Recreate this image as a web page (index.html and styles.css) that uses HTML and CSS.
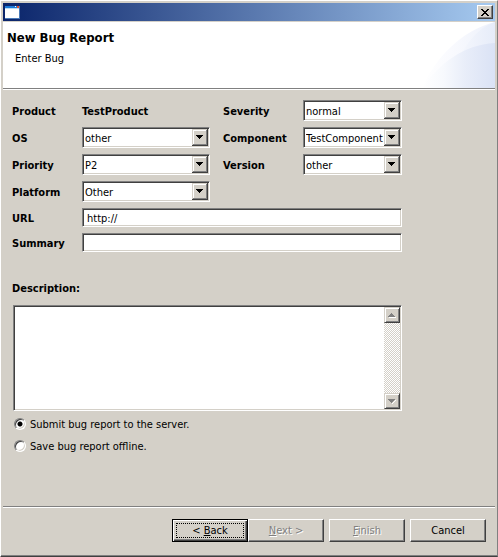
FILE: index.html
```html
<!DOCTYPE html>
<html lang="en">
<head>
<meta charset="utf-8">
<title>New Bug Report</title>
<link rel="stylesheet" href="styles.css">
</head>
<body>
<div class="window">
  <div class="titlebar">
    <svg class="app-icon" width="15" height="13" viewBox="0 0 15 13" shape-rendering="crispEdges" aria-hidden="true">
      <rect width="15" height="13" fill="#4a7ab8"/>
      <rect width="14" height="12" fill="#fff"/>
      <rect width="14" height="2" fill="#1c7ad8"/>
      <rect y="2" width="14" height="1" fill="#b8dcf4"/>
      <rect x="10" width="1" height="1" fill="#fff"/>
      <rect x="12" width="2" height="2" fill="#e05030"/>
    </svg>
    <button class="close" type="button" aria-label="Close">
      <svg width="8" height="7" viewBox="0 0 8 7" shape-rendering="crispEdges" aria-hidden="true">
        <path d="M0 0h2v1h1v1h2V1h1V0h2v1H7v1H6v1H5v1h1v1h1v1h1v1H6V6H5V5H3v1H2v1H0V6h1V5h1V4h1V3H2V2H1V1H0z"/>
      </svg>
    </button>
  </div>

  <header class="banner">
    <div>
      <h1>New Bug Report</h1>
      <p>Enter Bug</p>
    </div>
    <svg class="swoosh" width="75" height="66" viewBox="0 0 75 66" aria-hidden="true">
      <defs>
        <linearGradient id="g1" x1="0" x2="1"><stop offset="0" stop-color="#fff"/><stop offset=".4" stop-color="#f9fafe"/><stop offset="1" stop-color="#edf1fb"/></linearGradient>
        <linearGradient id="g2" x1="0" x2="1"><stop offset="0" stop-color="#f9fafe"/><stop offset="1" stop-color="#e6ecf9"/></linearGradient>
        <linearGradient id="g3" x1="0" x2="1"><stop offset="0" stop-color="#fff"/><stop offset=".3" stop-color="#f7f9fd"/><stop offset=".6" stop-color="#e8edf9"/><stop offset="1" stop-color="#dae2f5"/></linearGradient>
      </defs>
      <path d="M2 66C15 36 42 8 75 0V66z" fill="url(#g1)"/>
      <path d="M30 66C36 36 51 8 75 0V66z" fill="url(#g2)"/>
      <path d="M2 66C20 41 43 23 75 21V66z" fill="url(#g3)"/>
    </svg>
  </header>

  <form class="content" id="bug">
    <div class="fields">
      <span class="label">Product</span>
      <span class="label">TestProduct</span>
      <label class="label second" for="severity">Severity</label>
      <span class="combo"><select id="severity"><option>normal</option></select><svg class="arrow" width="16" height="17" viewBox="0 0 16 17" shape-rendering="crispEdges" aria-hidden="true"><use href="#combo-button"/></svg></span>

      <label class="label" for="os">OS</label>
      <span class="combo"><select id="os"><option>other</option></select><svg class="arrow" width="16" height="17" viewBox="0 0 16 17" shape-rendering="crispEdges" aria-hidden="true"><use href="#combo-button"/></svg></span>
      <label class="label second" for="component">Component</label>
      <span class="combo"><select id="component"><option>TestComponent</option></select><svg class="arrow" width="16" height="17" viewBox="0 0 16 17" shape-rendering="crispEdges" aria-hidden="true"><use href="#combo-button"/></svg></span>

      <label class="label" for="priority">Priority</label>
      <span class="combo"><select id="priority"><option>P2</option></select><svg class="arrow" width="16" height="17" viewBox="0 0 16 17" shape-rendering="crispEdges" aria-hidden="true"><use href="#combo-button"/></svg></span>
      <label class="label second" for="version">Version</label>
      <span class="combo"><select id="version"><option>other</option></select><svg class="arrow" width="16" height="17" viewBox="0 0 16 17" shape-rendering="crispEdges" aria-hidden="true"><use href="#combo-button"/></svg></span>

      <label class="label" for="platform">Platform</label>
      <span class="combo"><select id="platform"><option>Other</option></select><svg class="arrow" width="16" height="17" viewBox="0 0 16 17" shape-rendering="crispEdges" aria-hidden="true"><use href="#combo-button"/></svg></span>

      <label class="label start" for="url">URL</label>
      <input class="text wide" id="url" type="text" value="http://">

      <label class="label start" for="summary">Summary</label>
      <input class="text wide" id="summary" type="text">
    </div>

    <div class="description">
      <label class="label" for="description">Description:</label>
      <div class="memo">
        <textarea id="description"></textarea>
        <div class="scrollbar" aria-hidden="true">
          <span class="scroll-button"><svg width="8" height="5" viewBox="0 0 8 5" shape-rendering="crispEdges"><path d="M1 4h7v1H1z" fill="#fff"/><path d="M3 0h1v1h1v1h1v1h1v1H0V3h1V2h1V1h1z" fill="#808080"/></svg></span>
          <span class="scroll-button"><svg width="8" height="5" viewBox="0 0 8 5" shape-rendering="crispEdges"><path d="M7 1h1v1H7v1H6v1H5v1H4V4h1V3h1V2h1z" fill="#fff"/><path d="M0 0h7v1H6v1H5v1H4v1H3V3H2V2H1V1H0z" fill="#808080"/></svg></span>
        </div>
      </div>
    </div>

    <div class="choices">
      <label><input type="radio" name="target" checked>Submit bug report to the server.</label>
      <label><input type="radio" name="target">Save bug report offline.</label>
    </div>
  </form>

  <footer class="actions">
    <div class="pair">
      <button class="button default" type="button"><span class="focus">&lt; <u>B</u>ack</span></button>
      <button class="button" type="button" disabled><u>N</u>ext &gt;</button>
    </div>
    <button class="button" type="submit" form="bug" disabled><u>F</u>inish</button>
    <button class="button" type="button">Cancel</button>
  </footer>
</div>

<svg class="symbols" width="0" height="0" aria-hidden="true">
  <symbol id="combo-button" viewBox="0 0 16 17">
    <path d="M0 0h16v17H0z" fill="#404040"/>
    <path d="M0 0h15v16H0z" fill="#d4d0c8"/>
    <path d="M1 1h14v15H1z" fill="#808080"/>
    <path d="M1 1h13v14H1z" fill="#fff"/>
    <path d="M2 2h12v13H2z" fill="#d4d0c8"/>
    <path d="M4 6h7v1h-1v1H9v1H8v1H7V9H6V8H5V7H4z" fill="#000"/>
  </symbol>
</svg>
</body>
</html>
```

FILE: styles.css
```css
* {
  box-sizing: border-box;
}

body {
  margin: 0;
  background: #d4d0c8;
  color: #000;
  font: 11px/13px "DejaVu Sans Condensed", Tahoma, "DejaVu Sans", sans-serif;
}

button,
input,
select,
textarea {
  margin: 0;
  font: inherit;
  color: inherit;
}

.symbols {
  position: absolute;
}

.window {
  display: flex;
  flex-direction: column;
  min-height: 100vh;
  padding: 2px 2px 1px;
  border: 1px solid;
  border-color: #fff #808080 #404040 #fff;
  box-shadow: inset 0 -1px #808080;
}

.titlebar {
  display: flex;
  align-items: center;
  justify-content: space-between;
  height: 18px;
  padding: 0 2px;
  background: linear-gradient(to right, #0a246a, #a6caf0);
}

.close {
  display: flex;
  align-items: center;
  justify-content: center;
  width: 16px;
  height: 14px;
  padding: 0;
  border: 1px solid;
  border-color: #fff #404040 #404040 #fff;
  background: #d4d0c8;
  box-shadow: inset -1px -1px #808080;
}

.banner {
  display: flex;
  justify-content: space-between;
  height: 69px;
  border-top: 1px solid #d4d0c8;
  border-bottom: 1px solid #fff;
  background: #fff;
  box-shadow: inset 0 -1px #808080;
}

.banner h1 {
  margin: 8px 0 0 4px;
  font-size: 13px;
  line-height: 16px;
}

.banner p {
  margin: 6px 0 0 12px;
}

.swoosh {
  display: block;
}

.content {
  flex: 1;
  padding: 10px 9px;
}

.fields {
  display: grid;
  grid-template-columns: 70px 128px 93px 99px;
  row-gap: 6px;
  align-items: center;
}

.label {
  padding-top: 2px;
  font-weight: bold;
}

.second {
  padding-left: 13px;
}

.start {
  grid-column: 1;
}

.wide {
  grid-column: 2 / -1;
}

.combo,
.text,
.memo {
  border: 1px solid;
  border-color: #808080 #fff #fff #808080;
  background: #fff;
  box-shadow: inset 1px 1px #404040, inset -1px -1px #d4d0c8;
}

.combo {
  position: relative;
  height: 21px;
}

.combo select {
  display: block;
  width: 100%;
  height: 19px;
  padding: 2px 17px 0 2px;
  border: 0;
  background: transparent;
  appearance: none;
  outline: 0;
}

.arrow {
  position: absolute;
  top: 1px;
  right: 1px;
  pointer-events: none;
}

.text {
  width: 100%;
  height: 19px;
  padding: 2px 4px 0;
  outline: 0;
}

.description {
  display: grid;
  gap: 10px;
  width: 390px;
  margin-top: 28px;
}

.memo {
  display: flex;
  margin-left: 1px;
  padding: 1px;
}

.memo textarea {
  flex: 1;
  height: 102px;
  padding: 2px 4px;
  border: 0;
  background: transparent;
  resize: none;
  outline: 0;
}

.scrollbar {
  display: flex;
  flex-direction: column;
  justify-content: space-between;
  background: repeating-conic-gradient(#fff 0 25%, #d4d0c8 0 50%) 0 0 / 2px 2px;
}

.scroll-button {
  display: flex;
  align-items: center;
  justify-content: center;
  width: 16px;
  height: 16px;
  border: 1px solid;
  border-color: #d4d0c8 #404040 #404040 #d4d0c8;
  background: #d4d0c8;
  box-shadow: inset 1px 1px #fff, inset -1px -1px #808080;
}

.choices {
  display: grid;
  justify-items: start;
  gap: 6px;
  margin-top: 5px;
  padding-left: 2px;
}

.choices label {
  display: flex;
  align-items: center;
  gap: 4px;
  height: 16px;
}

.choices input {
  width: 12px;
  height: 12px;
  border: 1px solid;
  border-color: #808080 #fff #fff #808080;
  border-radius: 50%;
  background: #fff;
  box-shadow: inset 1px 1px #404040, inset -1px -1px #d4d0c8;
  appearance: none;
}

.choices input:checked {
  background: radial-gradient(circle, #000 2px, #fff 3px);
}

.actions {
  display: flex;
  justify-content: flex-end;
  gap: 5px;
  padding: 12px 9px;
  margin-bottom: 1px;
  border-top: 1px solid #808080;
  box-shadow: inset 0 1px #fff;
}

.pair {
  display: flex;
}

.button {
  width: 76px;
  height: 23px;
  padding: 0;
  border: 1px solid;
  border-color: #fff #404040 #404040 #fff;
  background: #d4d0c8;
  box-shadow: inset -1px -1px #808080;
}

.button:disabled {
  color: #808080;
  text-shadow: 1px 1px #fff;
}

.default {
  padding: 2px;
  border-color: #000;
  box-shadow: inset 1px 1px #fff, inset -1px -1px #404040, inset -2px -2px #808080;
}

.focus {
  display: block;
  margin: 0 1px;
  border: 1px dotted #000;
  line-height: 13px;
}
```
